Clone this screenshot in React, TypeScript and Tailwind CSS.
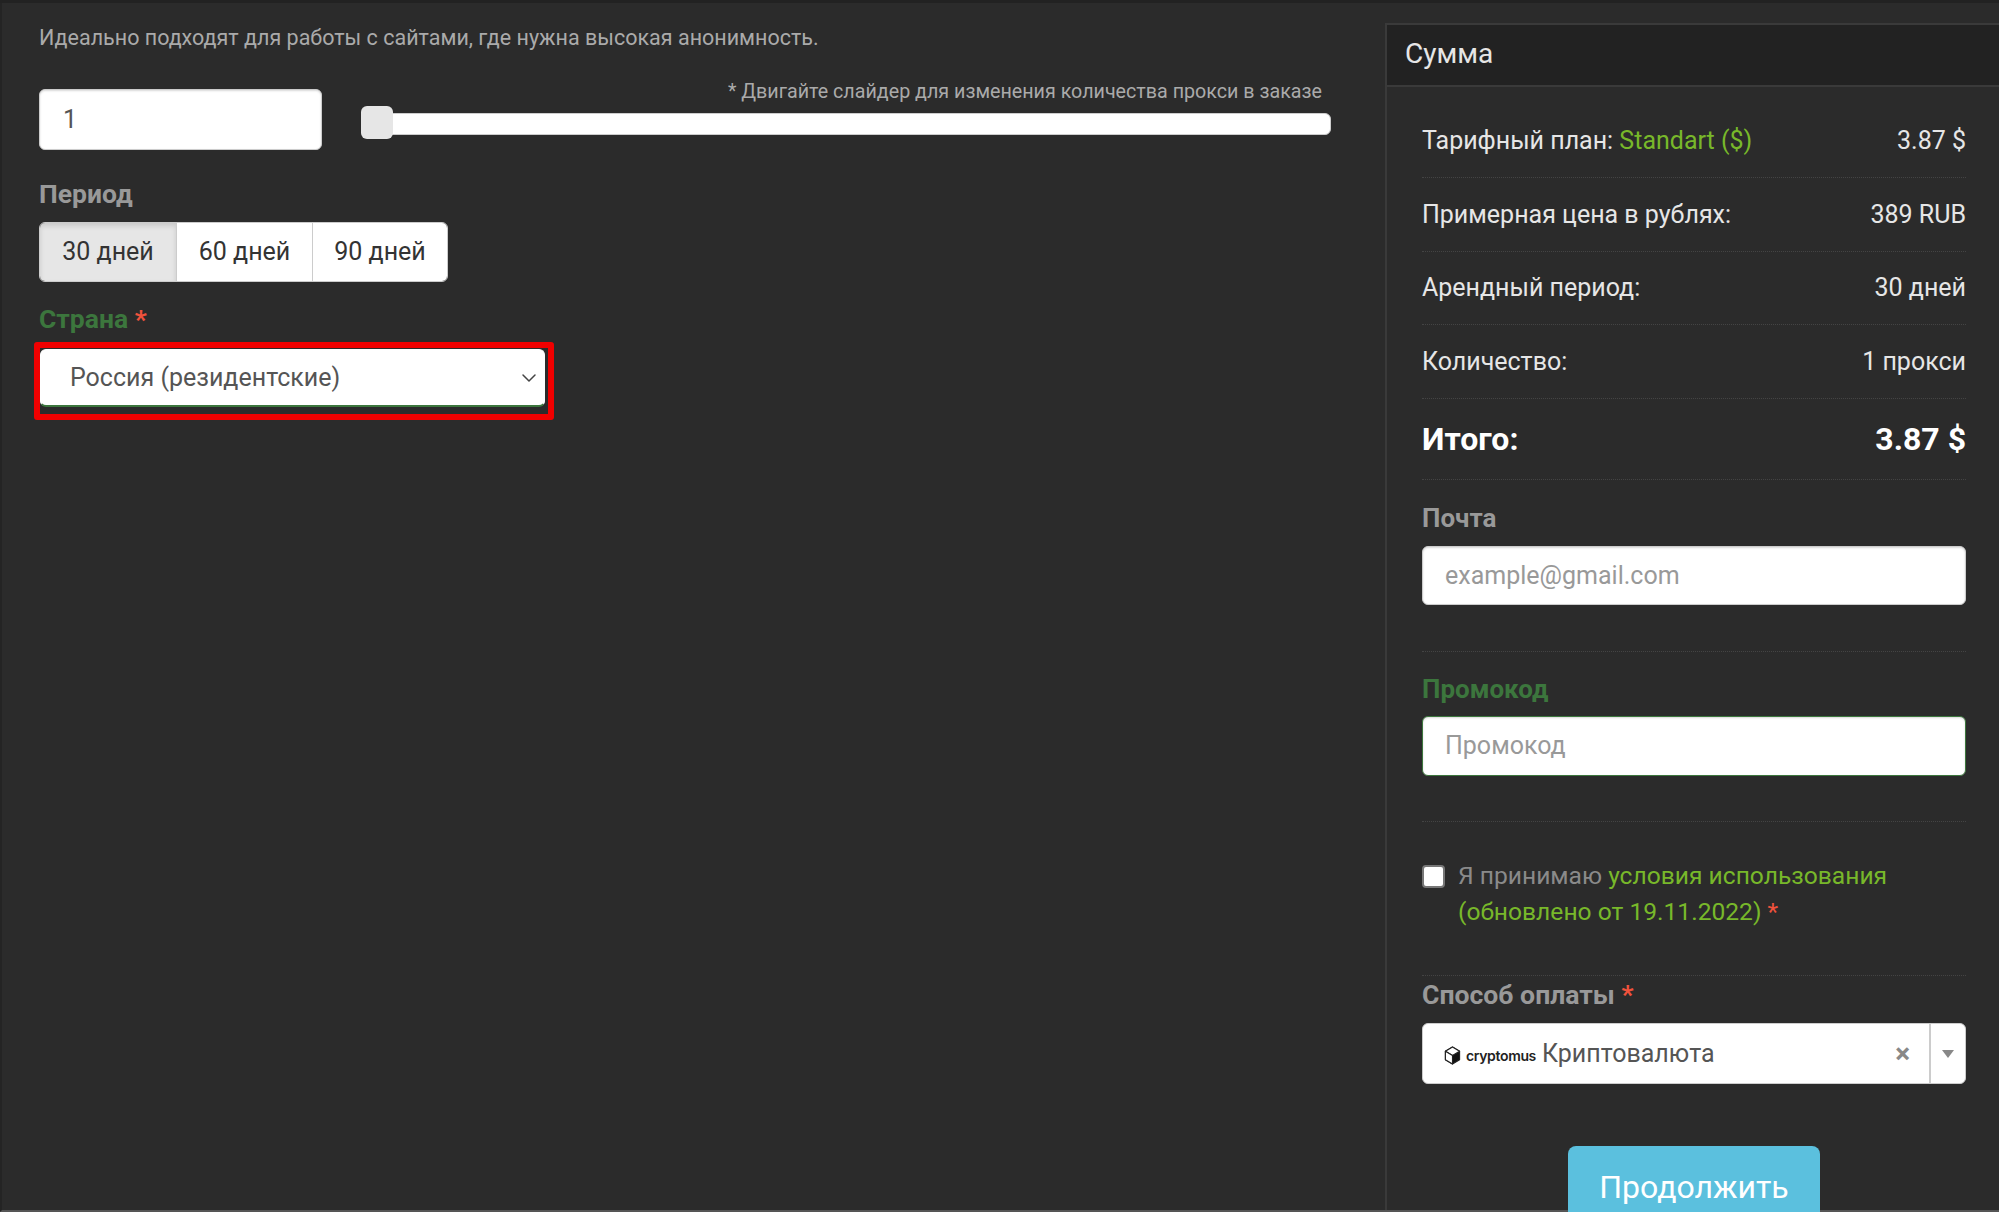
import React from "react";
import { ChevronDown } from "lucide-react";

const Dotted = ({ className = "" }: { className?: string }) => (
  <div className={`border-b border-dotted border-[#444444] ${className}`} />
);

const Row = ({ children, value }: { children: React.ReactNode; value: string }) => (
  <>
    <div className="flex h-[72px] items-center justify-between text-[25px] text-[#e6e6e6]">
      <span>{children}</span>
      <span>{value}</span>
    </div>
    <Dotted className="mb-[0.5px]" />
  </>
);

const Label = ({ children, className = "" }: { children: React.ReactNode; className?: string }) => (
  <div className={`font-bold leading-[30px] ${className}`}>{children}</div>
);

const Star = () => <span className="text-[#f0523c]">*</span>;

const inputCls =
  "flex items-center rounded-[6px] border border-[#cccccc] bg-white px-[22px] text-[25px] shadow-[inset_0_1px_2px_rgba(0,0,0,0.15)]";

export default function App() {
  return (
    <div
      className="flex h-[1212px] w-[1999px] flex-col overflow-hidden bg-[#2b2b2b]"
      style={{ fontFamily: "Roboto, sans-serif" }}
    >
      <div className="h-[3px] shrink-0 bg-[#222222]" />
      <div className="flex min-h-0 flex-1 border-l-2 border-[#242424] border-b-2 border-b-[#555555]">
        <div className="w-[1383px] shrink-0 pl-[37px] pr-[54px]">
          <p className="mt-[22px] text-[21.5px] leading-[26px] text-[#aaaaaa]">
            Идеально подходят для работы с сайтами, где нужна высокая анонимность.
          </p>
          <div className="mt-[28px] flex items-start">
            <div className={`${inputCls} mt-[10px] h-[61px] w-[283px] pl-[23px] pt-[1px] text-[#555555]`}>1</div>
            <div className="ml-[39px] flex-1">
              <p className="pr-[9px] pt-[1px] text-right text-[19.7px] leading-[24px] text-[#aaaaaa]">
                * Двигайте слайдер для изменения количества прокси в заказе
              </p>
              <div className="relative mt-[9px] h-[22px] rounded-[6px] border border-[#cccccc] bg-white">
                <div className="absolute left-[-1px] top-[-8px] h-[33px] w-[32px] rounded-[6px] bg-[#e6e6e6]" />
              </div>
            </div>
          </div>
          <Label className="mt-[29px] text-[26.5px] text-[#999999]">Период</Label>
          <div className="mt-[13px] flex h-[60px] w-[409px] overflow-hidden rounded-[6px] border border-[#cccccc] text-[25px] text-[#333333]">
            <div className="flex w-[136px] items-center justify-center bg-[#e6e6e6] shadow-[inset_0_3px_5px_rgba(0,0,0,0.125)]">
              30 дней
            </div>
            <div className="flex w-[136px] items-center justify-center border-l border-[#cccccc] bg-white">
              60 дней
            </div>
            <div className="flex flex-1 items-center justify-center border-l border-[#cccccc] bg-white">
              90 дней
            </div>
          </div>
          <Label className="mt-[22px] text-[26.5px] text-[#3c763d]">
            Страна <Star />
          </Label>
          <div className="ml-[-5px] mt-[8px] h-[78px] w-[520px] rounded-[3px] border-[6px] border-[#f00000] pt-[1px]">
            <div className="flex h-[58px] w-[505px] items-center justify-between rounded-[6px] border border-b-2 border-[#3c763d] border-x-white border-t-white bg-white pl-[29px] pr-[3px] text-[25px] text-[#555555]">
              Россия (резидентские)
              <ChevronDown className="h-[24px] w-[24px] text-[#444444]" strokeWidth={1.5} />
            </div>
          </div>
        </div>

        <div className="ml-0 flex-1 pt-[20px]">
          <div className="h-full border-l-2 border-t-2 border-[#3a3a3a]">
            <div className="flex h-[62px] items-center border-b-2 border-[#3a3a3a] bg-[#222222] pb-[3px] pl-[18px] text-[28px] text-[#e6e6e6]">
              Сумма
            </div>
            <div className="pl-[35px] pr-[33px] pt-[18px]">
              <Row value="3.87 $">
                Тарифный план: <span className="text-[#78b82a]">Standart ($)</span>
              </Row>
              <Row value="389 RUB">Примерная цена в рублях:</Row>
              <Row value="30 дней">Арендный период:</Row>
              <Row value="1 прокси">Количество:</Row>
              <div className="flex h-[80px] items-center justify-between text-[32px] font-bold text-white">
                <span>Итого:</span>
                <span>3.87 $</span>
              </div>
              <Dotted />
              <Label className="mt-[23px] text-[26px] text-[#999999]">Почта</Label>
              <div className={`${inputCls} mt-[13px] h-[59px] text-[#999999]`}>example@gmail.com</div>
              <Dotted className="mt-[46px]" />
              <Label className="mt-[22px] text-[26px] text-[#3c763d]">Промокод</Label>
              <div className={`${inputCls} mt-[12px] h-[60px] !border-[#3c763d] text-[#999999]`}>Промокод</div>
              <Dotted className="mt-[45px]" />
              <div className="mt-[36px] flex items-start text-[24.6px] leading-[36px]">
                <div className="mt-[7px] h-[23px] w-[23px] shrink-0 rounded-[4px] border-2 border-[#777777] bg-white" />
                <p className="ml-[13px] w-[480px] text-[#8a8a8a]">
                  Я принимаю <span className="text-[#78b82a]">условия использования</span>
                  <br />
                  <span className="text-[#78b82a]">(обновлено от 19.11.2022)</span> <Star />
                </p>
              </div>
              <Dotted className="mt-[45px]" />
              <Label className="mt-[4px] text-[26.6px] text-[#999999]">
                Способ оплаты <Star />
              </Label>
              <div className="mt-[13px] flex h-[61px] items-center rounded-[6px] border border-[#cccccc] bg-white text-[25px] text-[#555555]">
                <svg viewBox="0 0 24 26" className="ml-[21px] mt-[3px] h-[19px] w-[17px]">
                  <path d="M12 1 22 7v12l-10 6-10-6V7z" fill="#111111" stroke="#222222" strokeWidth="1.6" strokeLinejoin="round" />
                  <path d="M12 1 22 7l-10 6L2 7z" fill="#ffffff" stroke="#222222" strokeWidth="1.6" strokeLinejoin="round" />
                  <path d="M2 7l10 6v12L2 19z" fill="#ffffff" stroke="#222222" strokeWidth="1.6" strokeLinejoin="round" />
                </svg>
                <span
                  className="ml-[5px] mt-[3px] text-[14px] font-semibold tracking-[-0.35px] text-[#222222]"
                  style={{ fontFamily: "Inter, sans-serif" }}
                >
                  cryptomus
                </span>
                <span className="ml-[6px] flex-1">Криптовалюта</span>
                <span className="mr-[19px] text-[28px] font-bold leading-none text-[#888888]">×</span>
                <div className="flex h-full w-[36px] items-center justify-center border-l-2 border-[#cccccc]">
                  <div className="h-0 w-0 border-x-[6px] border-t-[8px] border-x-transparent border-t-[#888888]" />
                </div>
              </div>
              <div className="mt-[62px] flex justify-center">
                <div className="flex h-[80px] w-[252px] items-start justify-center rounded-[8px] bg-[#5bc0de] pt-[20px] text-[32px] leading-[42px] text-white">
                  Продолжить
                </div>
              </div>
            </div>
          </div>
        </div>
      </div>
    </div>
  );
}
